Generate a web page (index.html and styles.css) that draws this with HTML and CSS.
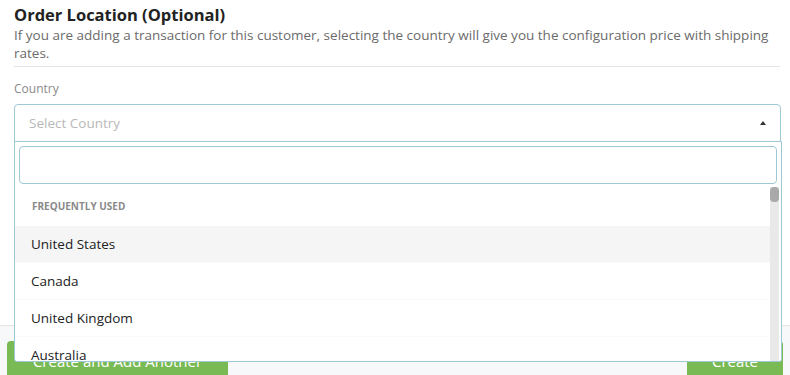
FILE: index.html
```html
<!DOCTYPE html>
<html lang="en">
<head>
  <meta charset="UTF-8" />
  <meta name="viewport" content="width=device-width, initial-scale=1.0"/>
  <title>Order Location</title>
  <link rel="stylesheet" href="styles.css">
</head>
<body>
  <div class="order-form">
    <div class="section-head">
      <h3>Order Location (Optional)</h3>
      <p>If you are adding a transaction for this customer, selecting the country will give you the configuration price with shipping rates.</p>
    </div>

    <div class="field">
      <label class="field-label">Country</label>
      <div class="select-wrap">
        <div class="select-box">
          <span class="select-placeholder">Select Country</span>
          <span class="select-caret"></span>
        </div>
        <div class="select-dropdown">
          <div class="search-wrap">
            <input type="text" class="search-input">
          </div>
          <div class="list-area">
            <ul class="option-list">
              <li class="option-group">Frequently Used</li>
              <li class="option active">United States</li>
              <li class="option">Canada</li>
              <li class="option">United Kingdom</li>
              <li class="option">Australia</li>
            </ul>
            <div class="scroll-track">
              <div class="scroll-thumb"></div>
            </div>
          </div>
        </div>
      </div>
    </div>

    <div class="form-footer">
      <button class="btn btn-left">Create and Add Another</button>
      <button class="btn btn-right">Create</button>
    </div>
  </div>
</body>
</html>
```

FILE: styles.css
```css
body {
  margin: 0;
  font-family: "Open Sans", "Liberation Sans", Arial, sans-serif;
  color: #333333;
  background: #ffffff;
}

.order-form {
  width: 790px;
  height: 375px;
  overflow: hidden;
}

.section-head {
  margin: 0 10px 0 14px;
  padding-top: 4px;
  padding-bottom: 4px;
  border-bottom: 1px solid #e4e4e4;
}

.section-head h3 {
  font-size: 16.5px;
  font-weight: 700;
  line-height: 22px;
  margin: 0;
  color: #222222;
}

.section-head p {
  font-size: 13.5px;
  line-height: 18px;
  margin: 0;
  color: #6b6b6b;
}

.field {
  margin: 0 9px 0 14px;
  padding-top: 14px;
  height: 244px;
}

.field-label {
  display: block;
  font-size: 12px;
  line-height: 16px;
  color: #8a8a8a;
  margin-bottom: 7px;
}

.select-wrap {
  position: relative;
}

.select-box {
  height: 36px;
  border: 1px solid #9fc8d6;
  border-radius: 4px 4px 0 0;
  display: flex;
  align-items: center;
  justify-content: space-between;
  padding: 0 14px;
}

.select-placeholder {
  font-size: 13.5px;
  color: #b9b9b9;
}

.select-caret {
  width: 0;
  height: 0;
  border-left: 3px solid transparent;
  border-right: 3px solid transparent;
  border-bottom: 4px solid #333333;
}

/* dropdown sits over the footer below */
.select-dropdown {
  position: absolute;
  top: 100%;
  left: 0;
  right: -1px;
  margin-top: -1px;
  background: #ffffff;
  border: 1px solid #9fc8d6;
  border-radius: 0 0 3px 3px;
  z-index: 2;
}

.search-wrap {
  padding: 4px 4px 3px 4px;
}

.search-input {
  display: block;
  box-sizing: border-box;
  width: 100%;
  height: 38px;
  border: 1px solid #9fc8d6;
  border-radius: 4px;
  outline: none;
}

.list-area {
  display: flex;
  height: 174px;
  padding-right: 2px;
}

.option-list {
  flex: 1;
  list-style: none;
  margin: 0;
  padding: 0;
  overflow: hidden;
}

.scroll-track {
  width: 9px;
  background: #e9e9e9;
}

.scroll-thumb {
  height: 15px;
  background: #a9a9a9;
  border-radius: 4px;
}

.option-group {
  height: 39px;
  line-height: 39px;
  padding-left: 17px;
  font-size: 10px;
  font-weight: 700;
  text-transform: uppercase;
  color: #8a8a8a;
}

.option {
  height: 37px;
  line-height: 37px;
  padding-left: 16px;
  font-size: 13.5px;
  color: #222222;
  border-bottom: 1px solid #fafafa;
  box-sizing: border-box;
}

.option.active {
  background: #f5f5f5;
}

.form-footer {
  border-top: 1px solid #e4e4e4;
  background: #f7f8fa;
  padding: 15px 7px 0 7px;
  display: flex;
  justify-content: space-between;
  height: 60px;
}

.btn {
  height: 40px;
  border: none;
  border-radius: 4px;
  background: #7aba55;
  color: #ffffff;
  font-family: "Open Sans", "Liberation Sans", Arial, sans-serif;
  font-size: 15px;
  padding: 0;
}

.btn-left {
  width: 221px;
}

.btn-right {
  width: 96px;
}
```
